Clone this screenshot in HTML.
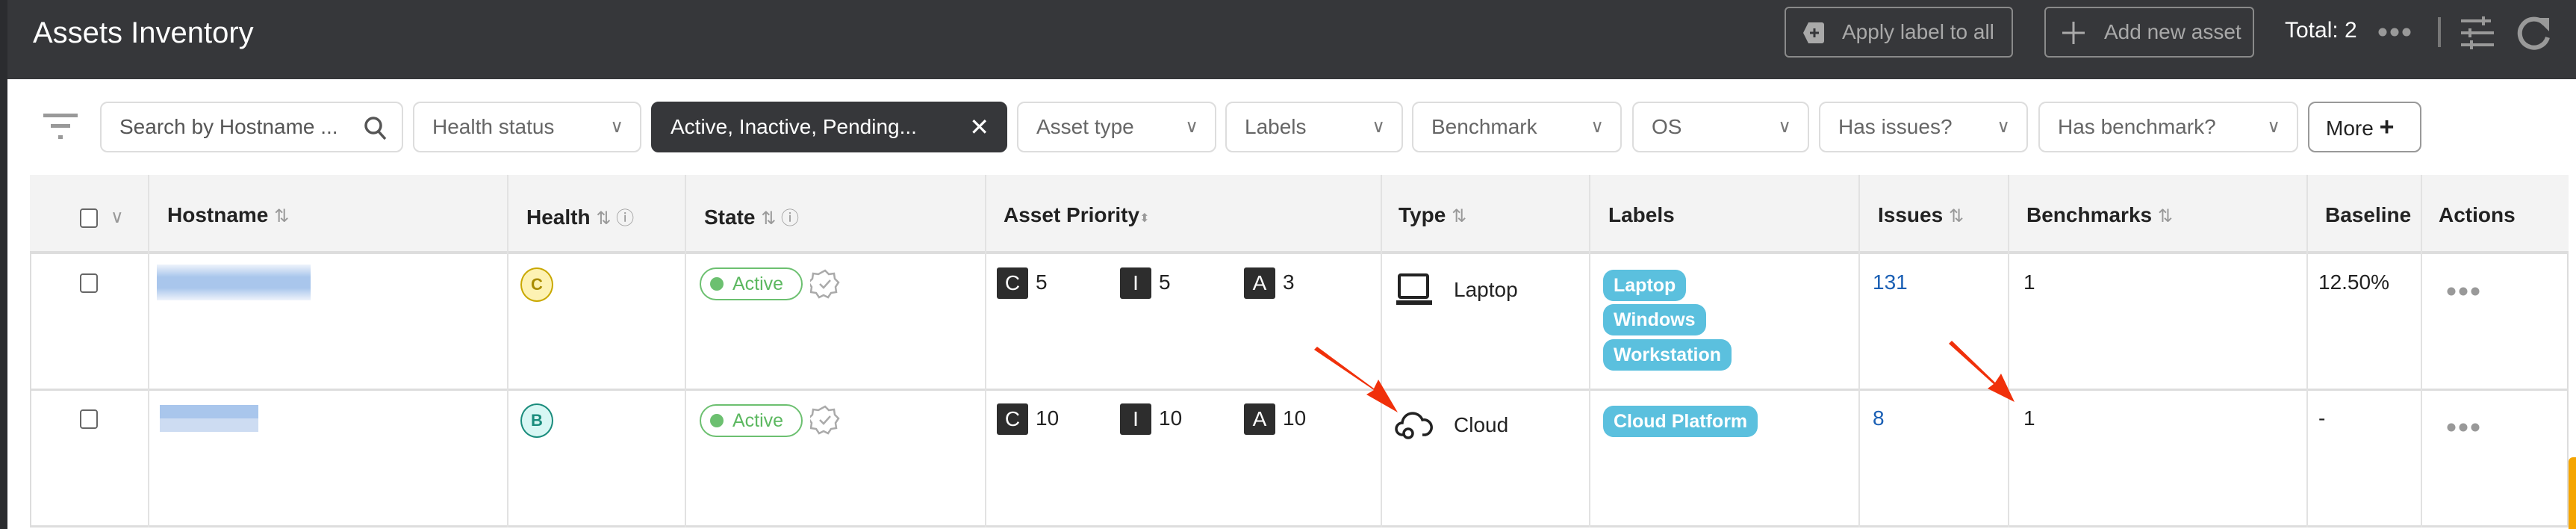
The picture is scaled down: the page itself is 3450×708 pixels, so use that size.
<!DOCTYPE html>
<html><head><meta charset="utf-8"><style>
*{margin:0;padding:0;box-sizing:border-box}
body{width:3450px;height:708px;overflow:hidden;background:#fff;font-family:"Liberation Sans",sans-serif;position:relative;color:#222}
.a{position:absolute}
.top{left:0;top:0;width:3450px;height:106px;background:#36373a}
.side{left:0;top:0;width:10px;height:708px;background:#2b2c2f}
.title{left:44px;top:22px;font-size:40px;color:#fff}
.hbtn{top:9px;height:68px;border:2px solid #8a8a8a;border-radius:6px;color:#a9a9a9;font-size:28px;line-height:64px;padding-left:75px}
.f{top:136px;height:68px;border:2px solid #ddd;border-radius:10px;font-size:28px;line-height:64px;color:#666;padding-left:24px}
.f .ch{position:absolute;right:22px;top:0;color:#777;font-size:24px}
.tbl{left:40px;top:234px;width:3400px;height:472px;border:2px solid #ddd}
.hdr{left:40px;top:234px;width:3400px;height:106px;background:#f3f3f3;border-bottom:4px solid #ddd}
.vl{top:234px;width:2px;height:472px;background:#e2e2e2}
.hl{left:40px;width:3400px;height:3px;background:#ddd}
.th{top:272px;font-size:28px;font-weight:bold;color:#222}
.sr{color:#999;font-weight:normal;font-size:24px}
.td{font-size:28px;color:#222}
.cb{width:24px;height:26px;border:2px solid #666;border-radius:4px;background:#fff}
.lbl{background:#5bc0de;color:#fff;font-weight:bold;font-size:25px;border-radius:14px;height:42px;line-height:42px;padding:0 14px}
.pr{width:42px;height:42px;background:#2d2d2d;color:#fff;font-size:28px;text-align:center;line-height:42px;border-radius:3px}
.act{width:138px;height:44px;border:2px solid #6cc070;border-radius:22px;color:#5cb860;font-size:25px;line-height:40px;padding-left:42px}
.act:before{content:"";position:absolute;left:12px;top:11px;width:18px;height:18px;border-radius:50%;background:#6cc070}
.dots{font-size:36px;color:#999;letter-spacing:2px}
</style></head><body>
<div class="a top"></div>
<div class="a side"></div>
<div class="a title">Assets Inventory</div>
<div class="a hbtn" style="left:2390px;width:306px"><svg class="a" style="left:22px;top:18px" width="30" height="30"><path d="M8 1h18a3 3 0 0 1 3 3v22a3 3 0 0 1-3 3H8L1 15z" fill="#a9a9a9"/><path d="M16 9v12M10 15h12" stroke="#36373a" stroke-width="3"/></svg>Apply label to all</div>
<div class="a hbtn" style="left:2738px;width:281px;padding-left:78px"><svg class="a" style="left:22px;top:18px" width="30" height="30"><path d="M15 0v30M0 15h30" stroke="#aaa" stroke-width="3"/></svg>Add new asset</div>
<div class="a" style="left:3060px;top:24px;font-size:30px;color:#fff">Total: 2</div>
<svg class="a" style="left:3185px;top:33px" width="48" height="20"><circle cx="6" cy="10" r="5.5" fill="#999"/><circle cx="22" cy="10" r="5.5" fill="#999"/><circle cx="38" cy="10" r="5.5" fill="#999"/></svg>
<div class="a" style="left:3265px;top:23px;width:4px;height:40px;background:#777"></div>
<svg class="a" style="left:3296px;top:22px" width="46" height="44" stroke="#999" stroke-width="4"><path d="M0 6h40M0 22h44M0 38h44M30 0v12M12 16v12M14 32v12"/></svg>
<svg class="a" style="left:3370px;top:20px" width="48" height="48" fill="none"><path d="M38 12A19 19 0 1 0 42 30" stroke="#999" stroke-width="6"/><path d="M26 4h18v18z" fill="#999"/></svg>

<svg class="a" style="left:58px;top:152px" width="46" height="36" fill="#999"><rect x="0" y="0" width="46" height="5"/><rect x="10" y="14" width="26" height="5"/><rect x="20" y="29" width="6" height="5"/></svg>
<div class="a f" style="left:134px;width:406px;color:#555">Search by Hostname ...<svg class="a" style="right:20px;top:18px" width="30" height="32" fill="none" stroke="#555" stroke-width="3.5"><circle cx="12" cy="12" r="10"/><path d="M19 20l9 10"/></svg></div>
<div class="a f" style="left:553px;width:306px">Health status<span class="ch">∨</span></div>
<div class="a f" style="left:872px;width:477px;background:#36373a;border-color:#36373a;color:#fff">Active, Inactive, Pending...<span class="ch" style="color:#fff;font-size:32px">✕</span></div>
<div class="a f" style="left:1362px;width:267px">Asset type<span class="ch">∨</span></div>
<div class="a f" style="left:1641px;width:238px">Labels<span class="ch">∨</span></div>
<div class="a f" style="left:1891px;width:281px">Benchmark<span class="ch">∨</span></div>
<div class="a f" style="left:2186px;width:237px">OS<span class="ch">∨</span></div>
<div class="a f" style="left:2436px;width:280px">Has issues?<span class="ch">∨</span></div>
<div class="a f" style="left:2730px;width:348px">Has benchmark?<span class="ch">∨</span></div>
<div class="a f" style="left:3091px;width:152px;border-color:#999;color:#222;padding-left:22px">More <b style="font-size:34px">+</b></div>

<div class="a tbl"></div>
<div class="a hdr"></div>
<div class="a hl" style="top:520px"></div>
<div class="a hl" style="top:703px"></div>
<div class="a vl" style="left:198px"></div><div class="a vl" style="left:679px"></div><div class="a vl" style="left:917px"></div><div class="a vl" style="left:1319px"></div><div class="a vl" style="left:1849px"></div><div class="a vl" style="left:2128px"></div><div class="a vl" style="left:2489px"></div><div class="a vl" style="left:2689px"></div><div class="a vl" style="left:3089px"></div><div class="a vl" style="left:3242px"></div>

<div class="a cb" style="left:107px;top:279px"></div><div class="a sr" style="left:148px;top:276px">∨</div>
<div class="a th" style="left:224px">Hostname <span class="sr">⇅</span></div>
<div class="a th" style="left:705px">Health <span class="sr">⇅ ⓘ</span></div>
<div class="a th" style="left:943px">State <span class="sr">⇅ ⓘ</span></div>
<div class="a th" style="left:1344px">Asset Priority<span class="sr" style="font-size:16px">⬍</span></div>
<div class="a th" style="left:1873px">Type <span class="sr">⇅</span></div>
<div class="a th" style="left:2154px">Labels</div>
<div class="a th" style="left:2515px">Issues <span class="sr">⇅</span></div>
<div class="a th" style="left:2714px">Benchmarks <span class="sr">⇅</span></div>
<div class="a th" style="left:3114px">Baseline</div>
<div class="a th" style="left:3266px">Actions</div>

<!-- row1 -->
<div class="a cb" style="left:107px;top:366px"></div>
<div class="a" style="left:210px;top:354px;width:206px;height:48px;background:linear-gradient(#eef3fb,#a9c6ec 35%,#a9c6ec 65%,#eef3fb)"></div>
<div class="a" style="left:697px;top:358px;width:44px;height:46px;border-radius:50%;border:2px solid #c9a800;background:#fdf2b3;color:#a98c00;font-weight:bold;font-size:22px;text-align:center;line-height:42px">C</div>
<div class="a act" style="left:937px;top:358px">Active</div>
<svg class="a" style="left:1085px;top:360px" width="40" height="40" fill="none" stroke="#aaa" stroke-width="2.5"><path d="M20 2l5 5 7-1 1 7 5 5-4 6 1 7-7 1-4 6-6-3-6 3-4-6-7-1 1-7-4-6 5-5 1-7 7 1z"/><path d="M13 20l5 5 9-10"/></svg>
<div class="a pr" style="left:1335px;top:358px">C</div><div class="a td" style="left:1387px;top:362px">5</div>
<div class="a pr" style="left:1500px;top:358px">I</div><div class="a td" style="left:1552px;top:362px">5</div>
<div class="a pr" style="left:1666px;top:358px">A</div><div class="a td" style="left:1718px;top:362px">3</div>
<svg class="a" style="left:1870px;top:366px" width="50" height="44"><rect x="4" y="2" width="38" height="30" rx="2" fill="none" stroke="#222" stroke-width="4"/><rect x="0" y="36" width="48" height="6" fill="#222"/></svg>
<div class="a td" style="left:1947px;top:372px">Laptop</div>
<div class="a lbl" style="left:2147px;top:361px">Laptop</div>
<div class="a lbl" style="left:2147px;top:407px">Windows</div>
<div class="a lbl" style="left:2147px;top:454px">Workstation</div>
<div class="a td" style="left:2508px;top:362px;color:#1a5fb4">131</div>
<div class="a td" style="left:2710px;top:362px">1</div>
<div class="a td" style="left:3105px;top:362px">12.50%</div>
<svg class="a" style="left:3277px;top:382px" width="48" height="16"><circle cx="6" cy="8" r="5.5" fill="#999"/><circle cx="22" cy="8" r="5.5" fill="#999"/><circle cx="38" cy="8" r="5.5" fill="#999"/></svg>

<!-- row2 -->
<div class="a cb" style="left:107px;top:548px"></div>
<div class="a" style="left:214px;top:542px;width:132px;height:36px;background:linear-gradient(#a9c6ec 50%,#cddcf2 50%)"></div>
<div class="a" style="left:697px;top:540px;width:44px;height:46px;border-radius:50%;border:2px solid #1a8c7c;background:#d8f7f4;color:#1a8c7c;font-weight:bold;font-size:22px;text-align:center;line-height:42px">B</div>
<div class="a act" style="left:937px;top:541px">Active</div>
<svg class="a" style="left:1085px;top:542px" width="40" height="40" fill="none" stroke="#aaa" stroke-width="2.5"><path d="M20 2l5 5 7-1 1 7 5 5-4 6 1 7-7 1-4 6-6-3-6 3-4-6-7-1 1-7-4-6 5-5 1-7 7 1z"/><path d="M13 20l5 5 9-10"/></svg>
<div class="a pr" style="left:1335px;top:540px">C</div><div class="a td" style="left:1387px;top:544px">10</div>
<div class="a pr" style="left:1500px;top:540px">I</div><div class="a td" style="left:1552px;top:544px">10</div>
<div class="a pr" style="left:1666px;top:540px">A</div><div class="a td" style="left:1718px;top:544px">10</div>
<svg class="a" style="left:1868px;top:548px" width="52" height="44" fill="none" stroke="#222" stroke-width="3.5"><path d="M14 34H10a8 8 0 0 1 0-16 14 14 0 0 1 27-4 10 10 0 0 1 4 20h-4"/><circle cx="18" cy="32" r="6"/></svg>
<div class="a td" style="left:1947px;top:553px">Cloud</div>
<div class="a lbl" style="left:2147px;top:543px">Cloud Platform</div>
<div class="a td" style="left:2508px;top:544px;color:#1a5fb4">8</div>
<div class="a td" style="left:2710px;top:544px">1</div>
<div class="a td" style="left:3105px;top:544px">-</div>
<svg class="a" style="left:3277px;top:564px" width="48" height="16"><circle cx="6" cy="8" r="5.5" fill="#999"/><circle cx="22" cy="8" r="5.5" fill="#999"/><circle cx="38" cy="8" r="5.5" fill="#999"/></svg>

<div class="a" style="left:3440px;top:612px;width:10px;height:96px;background:#f5a500;border-radius:6px 0 0 0"></div>
<svg class="a" style="left:0;top:0" width="3450" height="708"><polygon points="1764,464 1840,520 1846,508 1872,552 1830,528 1840,522 1760,468" fill="#f0300a"/><polygon points="2614,456 2672,512 2680,500 2698,538 2662,520 2670,514 2610,460" fill="#f0300a"/></svg>
</body></html>
